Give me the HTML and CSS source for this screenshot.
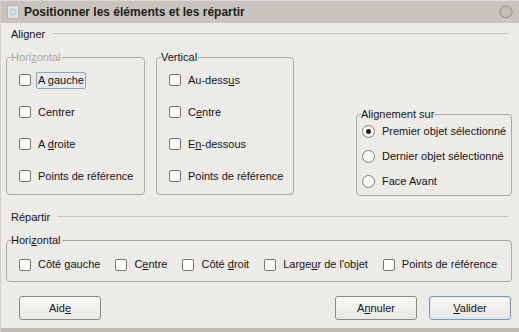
FILE: index.html
```html
<!DOCTYPE html>
<html lang="fr">
<head>
<meta charset="utf-8">
<title>Positionner les éléments et les répartir</title>
<link rel="stylesheet" href="styles.css">
</head>
<body>
<div class="window">
  <div class="titlebar">
    <svg class="app-icon" width="12" height="14" viewBox="0 0 12 14">
      <rect x="0.5" y="0.5" width="11" height="13" rx="1.5" fill="#dfe2e6" stroke="#b4b8bd"/>
      <path d="M4 4 h2 a3 3 0 0 1 0 6 h-2 z" fill="none" stroke="#c2c7cd" stroke-width="1.2"/>
    </svg>
    <span class="title">Positionner les éléments et les répartir</span>
    <span class="close-btn"></span>
  </div>

  <div class="content">
    <div class="section-head"><span>Aligner</span><span class="rule"></span></div>

    <div class="align-row">
      <fieldset class="group col">
        <legend class="disabled">Hori<u>z</u>ontal</legend>
        <div class="list">
          <div class="opt"><span class="box"></span><span class="lbl focus">A <u>g</u>auche</span></div>
          <div class="opt"><span class="box"></span><span class="lbl">Centrer</span></div>
          <div class="opt"><span class="box"></span><span class="lbl">A <u>d</u>roite</span></div>
          <div class="opt"><span class="box"></span><span class="lbl">Points de référence</span></div>
        </div>
      </fieldset>

      <fieldset class="group col">
        <legend>Vertical</legend>
        <div class="list">
          <div class="opt"><span class="box"></span><span class="lbl">Au-dess<u>u</u>s</span></div>
          <div class="opt"><span class="box"></span><span class="lbl">C<u>e</u>ntre</span></div>
          <div class="opt"><span class="box"></span><span class="lbl">E<u>n</u>-dessous</span></div>
          <div class="opt"><span class="box"></span><span class="lbl">Points de référence</span></div>
        </div>
      </fieldset>

      <fieldset class="group ref">
        <legend>Alignement sur</legend>
        <div class="radios">
          <div class="opt"><span class="radio on"></span><span class="lbl">Premier objet sélectionné</span></div>
          <div class="opt"><span class="radio"></span><span class="lbl">Dernier objet sélectionné</span></div>
          <div class="opt"><span class="radio"></span><span class="lbl">Face Avant</span></div>
        </div>
      </fieldset>
    </div>

    <div class="section-head second"><span>Répartir</span><span class="rule"></span></div>

    <fieldset class="group wide">
      <legend>Hori<u>z</u>ontal</legend>
      <div class="row">
        <div class="opt"><span class="box"></span><span class="lbl">Côté <u>g</u>auche</span></div>
        <div class="opt"><span class="box"></span><span class="lbl">C<u>e</u>ntre</span></div>
        <div class="opt"><span class="box"></span><span class="lbl">Côté <u>d</u>roit</span></div>
        <div class="opt"><span class="box"></span><span class="lbl">Large<u>u</u>r de l'objet</span></div>
        <div class="opt"><span class="box"></span><span class="lbl">Points de référence</span></div>
      </div>
    </fieldset>

    <div class="buttons">
      <button class="btn">Aid<u>e</u></button>
      <span class="spacer"></span>
      <button class="btn">A<u>n</u>nuler</button>
      <button class="btn default"><u>V</u>alider</button>
    </div>
  </div>
  <div class="bottom-edge"></div>
</div>
</body>
</html>
```

FILE: styles.css
```css
html, body {
  margin: 0;
  padding: 0;
}
body {
  width: 519px;
  height: 332px;
  overflow: hidden;
  background: #edebe8;
  font-family: "Liberation Sans", Arial, sans-serif;
  font-size: 11px;
  color: #141414;
}
u {
  text-decoration: underline;
  text-underline-offset: 1px;
}
.window {
  display: flex;
  flex-direction: column;
  height: 332px;
  box-sizing: border-box;
  border-left: 1px solid #d2cfca;
}
.titlebar {
  height: 23px;
  box-sizing: border-box;
  background: #c8c3bc;
  border-top: 1px solid #dcd8d3;
  display: flex;
  align-items: center;
  padding: 0 6px 0 6px;
  gap: 5px;
}
.title {
  font-weight: bold;
  font-size: 12px;
  color: #1d1d1d;
}
.close-btn {
  margin-left: auto;
  width: 10px;
  height: 10px;
  border-radius: 50%;
  border: 2px solid #a9a59f;
  background: #c3beb7;
  box-shadow: 0 1px 0 #ddd9d4;
}
.content {
  flex: 1;
  padding: 0 7px 0 5px;
  display: flex;
  flex-direction: column;
}
.section-head {
  display: flex;
  align-items: center;
  gap: 8px;
  height: 13px;
  margin-top: 4px;
  padding-left: 5px;
  padding-right: 4px;
}
.section-head.second {
  margin-top: 15px;
}
.section-head .rule {
  flex: 1;
  height: 1px;
  background: #c5c2bd;
}
.align-row {
  display: flex;
  gap: 11px;
  margin-top: 11px;
}
.group {
  margin: 0;
  padding: 0 0 0 4px;
  border: 1px solid #aaa7a2;
  border-radius: 4px;
  box-sizing: border-box;
  min-width: 0;
}
.group legend {
  padding: 0 1px 0 0;
  line-height: 13px;
}
.group legend.disabled {
  color: #aba8a4;
}
.col {
  width: 139px;
  height: 144px;
}
.col + .col {
  width: 138px;
}
.list {
  display: flex;
  flex-direction: column;
  padding-left: 8px;
}
.opt {
  display: flex;
  align-items: center;
  gap: 5px;
}
.list .opt {
  height: 32px;
}
.box {
  width: 10px;
  height: 10px;
  border: 1px solid #777470;
  border-radius: 2px;
  background: #ffffff;
  flex: none;
}
.lbl {
  padding: 1px 1px;
  border: 1px solid transparent;
  border-radius: 2px;
  line-height: 13px;
  white-space: nowrap;
}
.lbl.focus {
  border-color: #8ea4c0;
  background: #e4eaf1;
}
.ref {
  margin-left: auto;
  align-self: flex-end;
  width: 156px;
  height: 88px;
  margin-bottom: -1px;
}
.radios {
  display: flex;
  flex-direction: column;
  padding-left: 1px;
  margin-top: -2px;
}
.radios .opt {
  height: 25px;
}
.radio {
  position: relative;
  width: 11px;
  height: 11px;
  border: 1px solid #7f7c77;
  border-radius: 50%;
  background: radial-gradient(circle at 50% 40%, #ffffff 55%, #ecebe9 100%);
  flex: none;
  margin-right: 0;
}
.radio.on::after {
  content: "";
  position: absolute;
  left: 3px;
  top: 3px;
  width: 5px;
  height: 5px;
  border-radius: 50%;
  background: #222;
}
.wide {
  margin-top: 11px;
  height: 48px;
}
.row {
  display: flex;
  gap: 13px;
  padding-left: 8px;
  padding-top: 9px;
}
.buttons {
  display: flex;
  gap: 12px;
  margin-top: 14px;
  padding-left: 13px;
  padding-right: 1px;
}
.spacer {
  flex: 1;
}
.btn {
  width: 82px;
  height: 24px;
  font-family: "Liberation Sans", Arial, sans-serif;
  font-size: 11px;
  color: #141414;
  border: 1px solid #8c8984;
  border-radius: 3px;
  background: linear-gradient(#f8f7f6, #e9e7e4);
  padding: 0;
}
.btn + .btn {
  width: 81px;
}
.btn.default {
  width: 82px;
  border-color: #7f9abb;
  box-shadow: inset 0 0 0 1px #dbe3ec;
}
.bottom-edge {
  height: 4px;
  background: #bdb9b3;
}
```
